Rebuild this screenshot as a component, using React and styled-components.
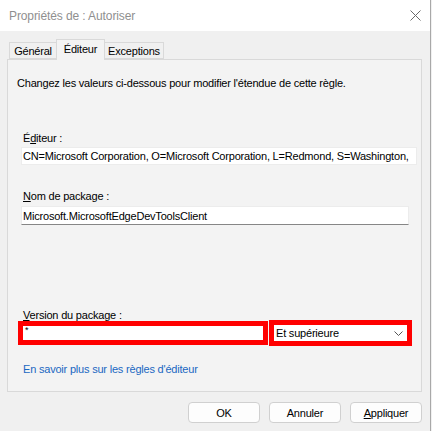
import React from 'react';
import styled, { createGlobalStyle } from 'styled-components';

const GlobalStyle = createGlobalStyle`
    html, body {
        margin: 0;
        padding: 0;
        background: #f0f0f0;
    }
    body {
        font-family: 'Liberation Sans', Arial, sans-serif;
        font-size: 11px;
        letter-spacing: -0.2px;
        color: #000;
    }
`

const Window = styled.div`
    width: 430px;
    height: 431px;
    border-right: 1px solid #a8a8a8;
    background: #f0f0f0;
    display: flex;
    flex-direction: column;
    overflow: hidden;
`
const TitleBar = styled.div`
    height: 31px;
    background: #fff;
    display: flex;
    align-items: center;
    justify-content: space-between;
    padding: 0 9px 0 9px;
    flex-shrink: 0;
`
const Title = styled.span`
    font-size: 12px;
    letter-spacing: -0.1px;
    color: #8f8f8f;
`
const CloseButton = styled.div`
    width: 11px;
    height: 11px;
    display: flex;
    color: #6a6a6a;
`
const Body = styled.div`
    padding: 8px 8px 0 7px;
    display: flex;
    flex-direction: column;
`
const TabRow = styled.div`
    display: flex;
    align-items: flex-end;
    padding-left: 2px;
    height: 20px;
    position: relative;
    z-index: 1;
`
const Tab = styled.div`
    box-sizing: border-box;
    height: ${p => (p.$active ? '21px' : '17px')};
    margin-bottom: ${p => (p.$active ? '-1px' : '0')};
    margin-left: ${p => (p.$active ? '-1px' : '0')};
    margin-right: ${p => (p.$active ? '-1px' : '0')};
    width: ${p => p.$w}px;
    border: 1px solid #d9d9d9;
    border-bottom: ${p => (p.$active ? 'none' : '1px solid #d9d9d9')};
    background: ${p => (p.$active ? '#f3f3f3' : '#f0f0f0')};
    display: flex;
    justify-content: center;
    align-items: center;
    padding-bottom: ${p => (p.$active ? '3px' : '0')};
    z-index: ${p => (p.$active ? 2 : 1)};
`
const Panel = styled.div`
    box-sizing: border-box;
    height: 333px;
    width: 415px;
    border: 1px solid #d9d9d9;
    background: #f3f3f3;
    padding: 16px 4px 0 13px;
    display: flex;
    flex-direction: column;
`
const Intro = styled.div`
    line-height: 14px;
    margin-left: -4px;
`
const Label = styled.div`
    line-height: 12px;
    padding-left: 2px;
    margin-top: ${p => p.$top}px;
`
const Accel = styled.span`
    text-decoration: underline;
`
const Field = styled.div`
    box-sizing: border-box;
    width: ${p => p.$w}px;
    height: ${p => p.$h}px;
    margin-top: ${p => p.$top}px;
    background: #fff;
    border: 1px solid #ececec;
    border-bottom: 1px solid ${p => (p.$underline ? '#868686' : '#ececec')};
    padding: 0 1px;
    display: flex;
    align-items: center;
    white-space: nowrap;
    overflow: hidden;
`
const VersionRow = styled.div`
    display: flex;
    align-items: center;
    margin-top: -1px;
    margin-left: -3px;
    height: 26px;
`
const RedBox = styled.div`
    box-sizing: border-box;
    width: ${p => p.$w}px;
    height: ${p => p.$h}px;
    margin-left: ${p => p.$left || 0}px;
    border: ${p => p.$b}px solid #ff0000;
    background: #fff;
    display: flex;
    align-items: center;
    justify-content: space-between;
    padding: 0 4px 0 2px;
`
const Star = styled.span`
    font-size: 9px;
    align-self: flex-start;
    line-height: 8px;
`
const Chevron = styled.svg`
    width: 9px;
    height: 5px;
`
const Link = styled.a`
    display: block;
    margin-top: 16px;
    padding-left: 2px;
    line-height: 14px;
    color: #1a67c2;
    text-decoration: none;
`
const ButtonRow = styled.div`
    display: flex;
    justify-content: flex-end;
    gap: 9px;
    margin-top: 10px;
`
const Button = styled.button`
    box-sizing: border-box;
    width: 72px;
    height: 21px;
    border: 1px solid #d0d0d0;
    border-radius: 4px;
    background: #fdfdfd;
    font-family: 'Liberation Sans', Arial, sans-serif;
    font-size: 11px;
    letter-spacing: -0.2px;
    color: #000;
    padding: 0;
`

export default function App() {
    return (
        <>
            <GlobalStyle />
            <Window>
                <TitleBar>
                    <Title>Propriétés de : Autoriser</Title>
                    <CloseButton>
                        <svg width="11" height="11" viewBox="0 0 11 11">
                            <path d="M0.5 0.5 L10.5 10.5 M10.5 0.5 L0.5 10.5" stroke="currentColor" strokeWidth="1" fill="none" />
                        </svg>
                    </CloseButton>
                </TitleBar>

                <Body>
                    <TabRow>
                        <Tab $w={48}>Général</Tab>
                        <Tab $w={49} $active>Éditeur</Tab>
                        <Tab $w={60}>Exceptions</Tab>
                    </TabRow>

                    <Panel>
                        <Intro>Changez les valeurs ci-dessous pour modifier l'étendue de cette règle.</Intro>

                        <Label $top={42}>É<Accel>d</Accel>iteur :</Label>
                        <Field $w={396} $h={18} $top={3}>
                            CN=Microsoft Corporation, O=Microsoft Corporation, L=Redmond, S=Washington,
                        </Field>

                        <Label $top={25}><Accel>N</Accel>om de package :</Label>
                        <Field $w={388} $h={19} $top={4} $underline>
                            Microsoft.MicrosoftEdgeDevToolsClient
                        </Field>

                        <Label $top={84}><Accel>V</Accel>ersion du package :</Label>
                        <VersionRow>
                            <RedBox $w={250} $h={24} $b={5}>
                                <Star>*</Star>
                            </RedBox>
                            <RedBox $w={143} $h={26} $b={5} $left={1}>
                                <span>Et supérieure</span>
                                <Chevron viewBox="0 0 9 5">
                                    <path d="M0.5 0.5 L4.5 4.5 L8.5 0.5" stroke="#555" strokeWidth="1" fill="none" />
                                </Chevron>
                            </RedBox>
                        </VersionRow>

                        <Link href="#">En savoir plus sur les règles d'éditeur</Link>
                    </Panel>

                    <ButtonRow>
                        <Button>OK</Button>
                        <Button>Annuler</Button>
                        <Button><Accel>A</Accel>ppliquer</Button>
                    </ButtonRow>
                </Body>
            </Window>
        </>
    );
}
